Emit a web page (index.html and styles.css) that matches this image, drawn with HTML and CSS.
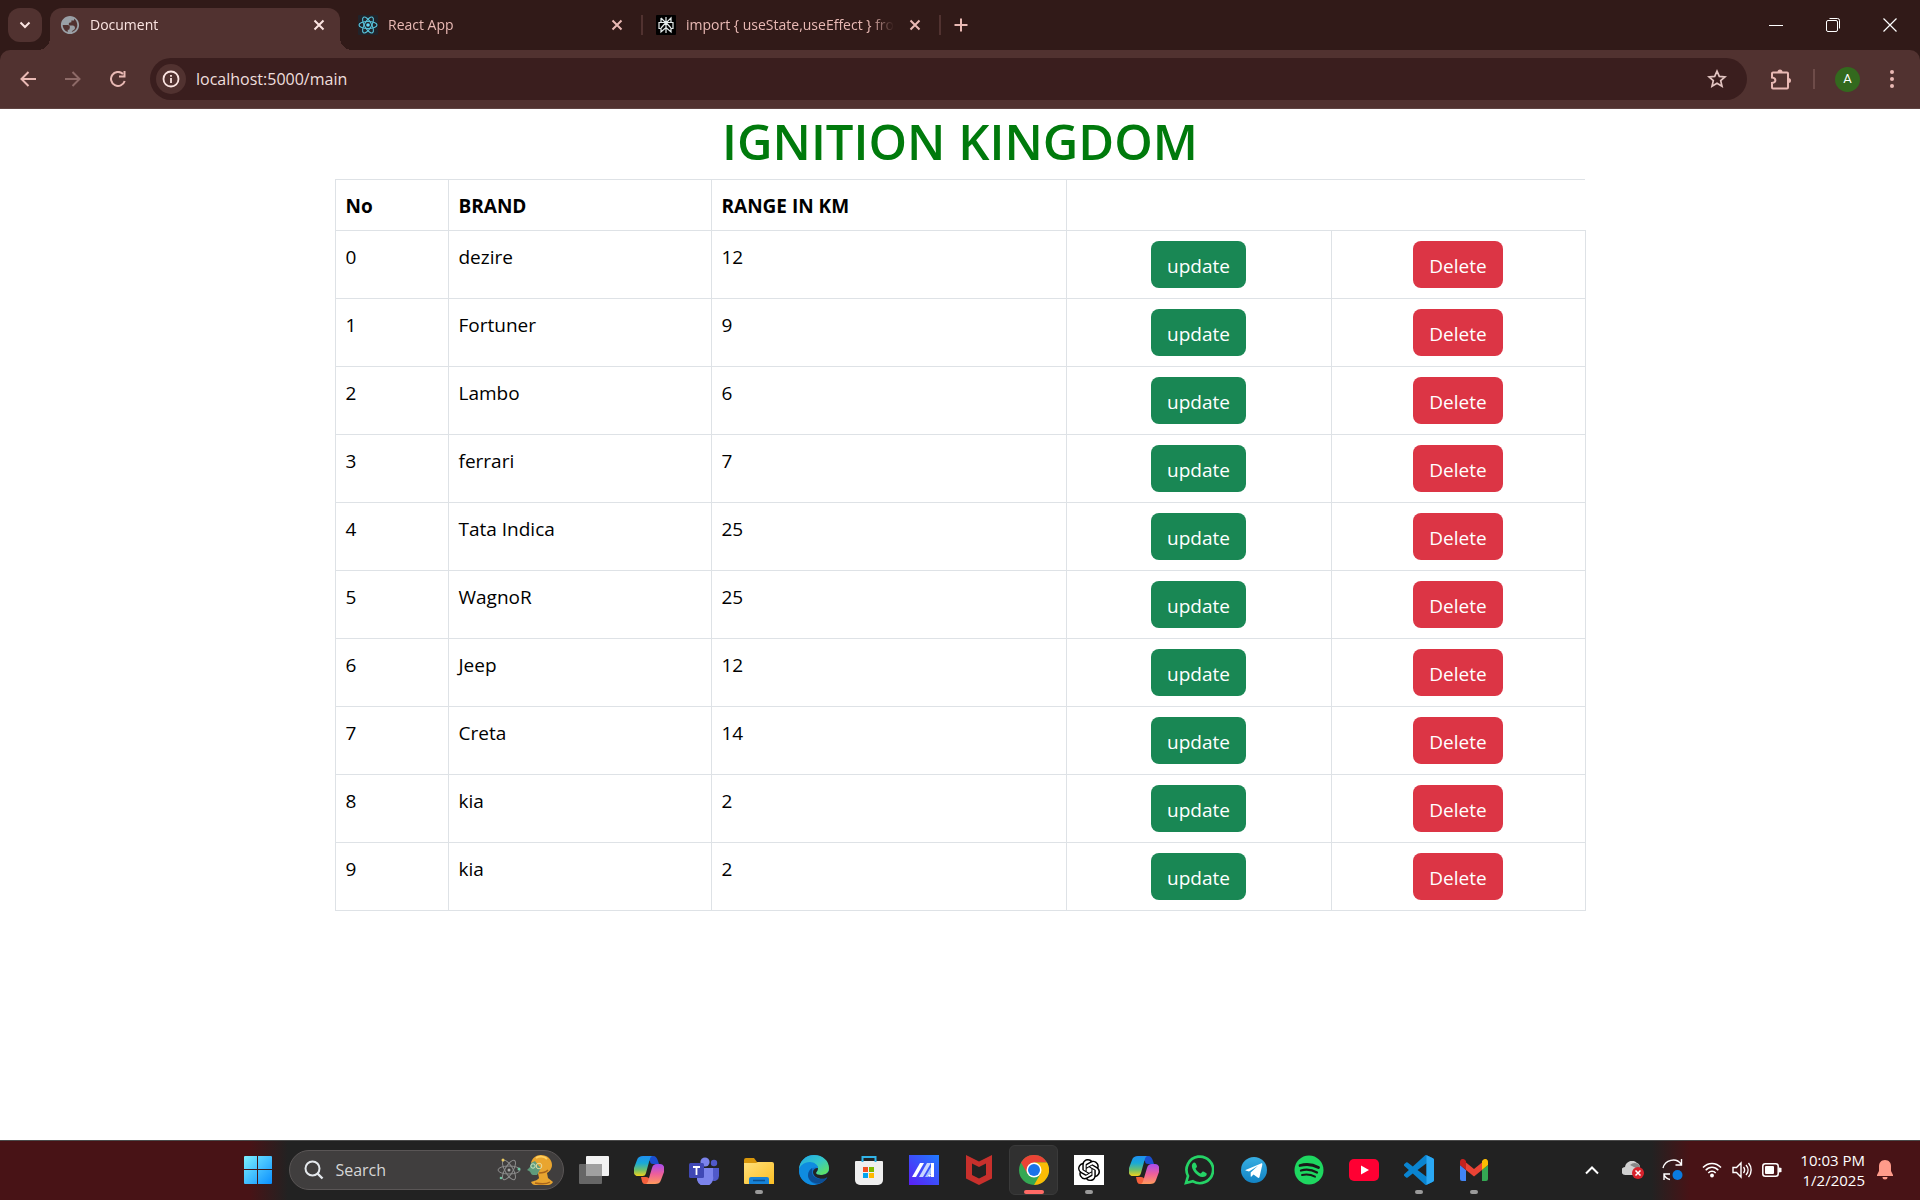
FILE: index.html
```html
<!DOCTYPE html>
<html lang="en">
<head>
<meta charset="utf-8">
<title>Document</title>
<meta name="viewport" content="width=device-width, initial-scale=1">
<link rel="stylesheet" href="styles.css">
</head>
<body>
<svg class="defs" width="0" height="0" aria-hidden="true">
  <defs>
    <linearGradient id="cpBlue" x1="0" y1="0" x2="0" y2="1"><stop offset="0" stop-color="#1f8ff0"/><stop offset=".35" stop-color="#18a9d8"/><stop offset=".7" stop-color="#6fc06a"/><stop offset="1" stop-color="#f2d21c"/></linearGradient>
    <linearGradient id="cpPink" x1="0" y1="0" x2="0" y2="1"><stop offset="0" stop-color="#a64cf0"/><stop offset=".5" stop-color="#ee5f9a"/><stop offset="1" stop-color="#ff9a5c"/></linearGradient>
    <linearGradient id="win" x1="0" y1="0" x2="1" y2="1"><stop offset="0" stop-color="#7cf0ff"/><stop offset="1" stop-color="#0a8fff"/></linearGradient>
    <linearGradient id="folder" x1="0" y1="0" x2="1" y2="1"><stop offset="0" stop-color="#ffe07a"/><stop offset="1" stop-color="#fbbf24"/></linearGradient>
    <linearGradient id="edgeTop" x1="0" y1="0" x2="1" y2="1"><stop offset="0" stop-color="#1fa6e8"/><stop offset=".5" stop-color="#35c8c8"/><stop offset="1" stop-color="#6ae84a"/></linearGradient>
    <linearGradient id="ma" x1="0" y1="1" x2="1" y2="0"><stop offset="0" stop-color="#5b1ff5"/><stop offset="1" stop-color="#1f7bff"/></linearGradient>
    <linearGradient id="tg" x1="0" y1="0" x2="0" y2="1"><stop offset="0" stop-color="#37aee2"/><stop offset="1" stop-color="#1283c4"/></linearGradient>
    <symbol id="close" viewBox="0 0 14 14"><path d="M2.500 2.500l9 9M11.500 2.500l-9 9" fill="none" stroke="currentColor" stroke-width="2"/></symbol>
    <symbol id="copilot" viewBox="0 0 30 28">
      <path d="M9 0h10c3 0 4 2 5 5l1 3h-6c-2 0-3-1-3-3z" fill="#1a4fd0"/>
      <path d="M21 28H11c-3 0-3-3-4-7h5c2 0 3 1 4 3z" fill="#f4603c"/>
      <path d="M9 0h9c-2 1-2 3-3 6l-3 11c-1 3-2 3-5 3H4c-4 0-5-4-4-8l3-8c1-3 3-4 6-4z" fill="url(#cpBlue)"/>
      <path d="M21 28h-9c2-1 2-3 3-6l3-10c1-3 2-4 5-4h3c4 0 5 4 4 8l-3 8c-1 3-3 4-6 4z" fill="url(#cpPink)"/>
    </symbol>
  </defs>
</svg>

<div class="window">
  <header class="browser">
    <div class="tabstrip">
      <button class="tab-search" aria-label="Search tabs"><svg width="12" height="8" viewBox="0 0 12 8"><path d="M1.500 1.500L6 6l4.500-4.500" fill="none" stroke="currentColor" stroke-width="2"/></svg></button>
      <nav class="tabs" aria-label="Tabs">
        <div class="tab active">
          <svg class="favicon" width="20" height="20" viewBox="1 1 22 22"><path fill="#9aa0a6" d="M12 2C6.480 2 2 6.480 2 12s4.480 10 10 10 10-4.480 10-10S17.520 2 12 2zM4 12h4.400c3.400 0 4.300 1.700 2.700 5.100H9.500v2.500C6.300 18.600 4 15.500 4 12zm10 7.700c0-2 3.500-1.700 3.500-4.700 0-2-1.500-2.500-3.500-2.500h-3c-1-2.500 0-3.500 2.500-3.500V7h3V5c2 1.300 3.500 4 3.500 7 0 3.700-2.500 6.800-6 7.700z"/></svg>
          <a class="tab-title" href="#document">Document</a>
          <button class="tab-close" aria-label="Close Document"><svg width="14" height="14"><use href="#close"/></svg></button>
        </div>
        <div class="tab">
          <svg class="favicon" width="20" height="20" viewBox="0 0 20 20"><rect width="20" height="20" rx="1" fill="#20232a"/><g fill="none" stroke="#58c4dc" stroke-width="1.100"><ellipse cx="10" cy="10" rx="9" ry="3.500"/><ellipse cx="10" cy="10" rx="9" ry="3.500" transform="rotate(60 10 10)"/><ellipse cx="10" cy="10" rx="9" ry="3.500" transform="rotate(120 10 10)"/></g><circle cx="10" cy="10" r="1.800" fill="#61dafb"/></svg>
          <a class="tab-title" href="#react">React App</a>
          <button class="tab-close" aria-label="Close React App"><svg width="14" height="14"><use href="#close"/></svg></button>
        </div>
        <div class="tab divided">
          <svg class="favicon" width="20" height="20" viewBox="0 0 20 20"><rect width="20" height="20" rx="1" fill="#000"/><path d="M10 2v16M5 3l5 5 5-5v4.500M5 3v4.500M3 7.500h14v6h-2V17l-5-4.500L5 17v-3.500H3zM10 7.500L5 13M10 7.500l5 5.500" fill="none" stroke="#e6ecec" stroke-width="1.200"/></svg>
          <a class="tab-title" href="#import">import { useState,useEffect } from</a>
          <button class="tab-close" aria-label="Close import"><svg width="14" height="14"><use href="#close"/></svg></button>
        </div>
      </nav>
      <button class="new-tab" aria-label="New tab"><svg width="14" height="14" viewBox="0 0 14 14"><path d="M7 0.500v13M.5 7h13" stroke="currentColor" stroke-width="2"/></svg></button>
      <div class="window-controls">
        <button aria-label="Minimize"><svg width="14" height="14" viewBox="0 0 14 14"><path d="M0 7.500h14" stroke="#fff"/></svg></button>
        <button aria-label="Restore"><svg width="14" height="14" viewBox="0 0 14 14"><path d="M3.500 .5h8a2 2 0 0 1 2 2v8" fill="none" stroke="#fff"/><rect x=".5" y="2.500" width="11" height="11" rx="1.500" fill="none" stroke="#fff"/></svg></button>
        <button aria-label="Close window"><svg width="14" height="14" viewBox="0 0 14 14"><path d="M.5 .5l13 13M13.500 .5l-13 13" stroke="#fff" stroke-width="1.200"/></svg></button>
      </div>
    </div>
    <div class="toolbar">
      <button class="nav-button" aria-label="Back"><svg width="16" height="16" viewBox="0 0 16 16"><path d="M16 8H1.500M8.500 1L1.500 8l7 7" fill="none" stroke="currentColor" stroke-width="2"/></svg></button>
      <button class="nav-button" aria-label="Forward" disabled><svg width="16" height="16" viewBox="0 0 16 16"><path d="M0 8h14.500M7.500 1l7 7-7 7" fill="none" stroke="currentColor" stroke-width="2"/></svg></button>
      <button class="nav-button" aria-label="Reload"><svg width="16" height="16" viewBox="0 0 16 16"><path d="M13 3A7 7 0 1 0 14.700 10" fill="none" stroke="currentColor" stroke-width="2"/><path d="M15.500 0v6.500H9v-2h4.500V0z" fill="currentColor"/></svg></button>
      <div class="omnibox">
        <button class="site-info" aria-label="Site information"><svg width="18" height="18" viewBox="0 0 18 18"><circle cx="9" cy="9" r="7.500" fill="none" stroke="currentColor" stroke-width="1.800"/><path d="M9 8v5M9 5v1.800" stroke="currentColor" stroke-width="1.800"/></svg></button>
        <input class="address" type="text" value="localhost:5000/main" aria-label="Address">
        <button class="bookmark" aria-label="Bookmark"><svg width="20" height="20" viewBox="0 0 20 20"><path d="M10 2.200l2.300 5.200 5.700.5-4.300 3.700 1.300 5.600-5-3-5 3 1.300-5.600L2 7.900l5.700-.5z" fill="none" stroke="currentColor" stroke-width="1.700"/></svg></button>
      </div>
      <button class="tool" aria-label="Extensions"><svg width="22" height="22" viewBox="0 0 22 22"><path d="M2 5.500a1 1 0 0 1 1-1h14a1 1 0 0 1 1 1v14a1 1 0 0 1-1 1H3a1 1 0 0 1-1-1V15c4.500-.5 4.500-5 0-5.500z" fill="none" stroke="currentColor" stroke-width="2"/><path d="M7.500 4a2.500 2.500 0 0 1 5 0zM18.500 10a2.500 2.500 0 0 1 0 5z" fill="currentColor"/></svg></button>
      <span class="tool-divider"></span>
      <button class="avatar" aria-label="Profile">A</button>
      <button class="tool menu" aria-label="Menu"><svg width="4" height="18" viewBox="0 0 4 18"><g fill="currentColor"><circle cx="2" cy="2" r="2"/><circle cx="2" cy="9" r="2"/><circle cx="2" cy="16" r="2"/></g></svg></button>
    </div>
  </header>

  <main class="page">
    <h1>IGNITION KINGDOM</h1>
    <table class="cars">
      <colgroup><col class="c-no"><col class="c-brand"><col class="c-range"><col class="c-update"><col class="c-delete"></colgroup>
      <thead><tr><th scope="col">No</th><th scope="col">BRAND</th><th scope="col">RANGE IN KM</th></tr></thead>
      <tbody>
        <tr><td>0</td><td>dezire</td><td>12</td><td class="action"><button class="btn update">update</button></td><td class="action"><button class="btn delete">Delete</button></td></tr>
        <tr><td>1</td><td>Fortuner</td><td>9</td><td class="action"><button class="btn update">update</button></td><td class="action"><button class="btn delete">Delete</button></td></tr>
        <tr><td>2</td><td>Lambo</td><td>6</td><td class="action"><button class="btn update">update</button></td><td class="action"><button class="btn delete">Delete</button></td></tr>
        <tr><td>3</td><td>ferrari</td><td>7</td><td class="action"><button class="btn update">update</button></td><td class="action"><button class="btn delete">Delete</button></td></tr>
        <tr><td>4</td><td>Tata Indica</td><td>25</td><td class="action"><button class="btn update">update</button></td><td class="action"><button class="btn delete">Delete</button></td></tr>
        <tr><td>5</td><td>WagnoR</td><td>25</td><td class="action"><button class="btn update">update</button></td><td class="action"><button class="btn delete">Delete</button></td></tr>
        <tr><td>6</td><td>Jeep</td><td>12</td><td class="action"><button class="btn update">update</button></td><td class="action"><button class="btn delete">Delete</button></td></tr>
        <tr><td>7</td><td>Creta</td><td>14</td><td class="action"><button class="btn update">update</button></td><td class="action"><button class="btn delete">Delete</button></td></tr>
        <tr><td>8</td><td>kia</td><td>2</td><td class="action"><button class="btn update">update</button></td><td class="action"><button class="btn delete">Delete</button></td></tr>
        <tr><td>9</td><td>kia</td><td>2</td><td class="action"><button class="btn update">update</button></td><td class="action"><button class="btn delete">Delete</button></td></tr>
      </tbody>
    </table>
  </main>

  <footer class="taskbar">
    <div class="apps">
      <button class="app" aria-label="Start"><svg width="30" height="30" viewBox="0 0 30 30"><path fill="url(#win)" d="M2 1h12v13H1V2a1 1 0 0 1 1-1zM15 1h13a1 1 0 0 1 1 1v12H15zM1 15h13v14H2a1 1 0 0 1-1-1zM15 15h14v13a1 1 0 0 1-1 1H15z"/></svg></button>
      <label class="search">
        <svg width="20" height="20" viewBox="0 0 20 20"><circle cx="8.500" cy="8.500" r="7" fill="none" stroke="#e4e8ec" stroke-width="2"/><path d="M13.500 13.500l5 5" stroke="#e4e8ec" stroke-width="2.400"/></svg>
        <input type="search" placeholder="Search" aria-label="Search">
        <svg width="24" height="24" viewBox="0 0 24 24"><g fill="none" stroke="#8c8c8c" stroke-width="1"><ellipse cx="12" cy="12" rx="11" ry="4"/><ellipse cx="12" cy="12" rx="11" ry="4" transform="rotate(60 12 12)"/><ellipse cx="12" cy="12" rx="11" ry="4" transform="rotate(120 12 12)"/></g><circle cx="12" cy="12" r="1.500" fill="#aaa"/><circle cx="6" cy="2" r="1.500" fill="#e8c860"/><circle cx="22" cy="11" r="1.500" fill="#6fc0a0"/><circle cx="4" cy="20" r="1.300" fill="#6fc0a0"/></svg>
        <svg width="26" height="30" viewBox="0 0 26 30"><path d="M4 8C5 3 9 0 14 0c6 0 11 4 11 10 0 4-3 7-5 8l1 5 5 4c-1 2-3 3-5 3H8c-2 0-3-1-4-3 3-1 7-2 8-4l-1-5z" fill="#e9a52f"/><path d="M4 8l4-2 3 4 3 3-4 7H6c-2 0-2-3-4-4l-2-1 3-3z" fill="#5f9b7c"/><path d="M12 18c4 0 7-1 9-3M8 28c5 1 12 1 15-1" fill="none" stroke="#a8651c" stroke-width="1.500"/><circle cx="6" cy="11" r="2.200" fill="none" stroke="#cfe6c0" stroke-width="1"/><circle cx="12" cy="11" r="2.800" fill="none" stroke="#e8dca0" stroke-width="1"/><path d="M9 3c3-2 8-2 11 1" stroke="#ffd060" stroke-width="2" fill="none"/></svg>
      </label>
      <button class="app" aria-label="Task view"><svg width="30" height="30" viewBox="0 0 30 30"><rect x="7" y="1" width="23" height="20" rx="1" fill="#f2f2f2"/><rect x="0" y="9" width="23" height="20" rx="1" fill="#666"/><path d="M7 9h16v12H7z" fill="#a0a0a0"/></svg></button>
      <button class="app" aria-label="Copilot"><svg width="30" height="28"><use href="#copilot"/></svg></button>
      <button class="app" aria-label="Teams"><svg width="30" height="30" viewBox="0 0 30 30"><circle cx="25" cy="8" r="3.200" fill="#5059c9"/><path d="M19 13h11v8a5 5 0 0 1-8 4z" fill="#5059c9"/><circle cx="16" cy="7" r="4.600" fill="#7b83eb"/><path d="M8 13h16v8a8 8 0 0 1-16 4z" fill="#7b83eb"/><rect y="8" width="15" height="15" rx="1.500" fill="#4048b5"/><path d="M4 12h7M7.500 12v8" stroke="#fff" stroke-width="1.800"/></svg></button>
      <button class="app running" aria-label="File Explorer"><svg width="30" height="30" viewBox="0 0 30 30"><path d="M0 5a2 2 0 0 1 2-2h8l3 4h10v8H0z" fill="#d8960a"/><path d="M0 8h12l2-1h14a2 2 0 0 1 2 2v20H1a1 1 0 0 1-1-1z" fill="url(#folder)"/><path d="M5 29v-5a2 2 0 0 1 2-2h16a2 2 0 0 1 2 2v5z" fill="#1683d8"/><path d="M9 25.500h12" stroke="#0b4f8f" stroke-width="1.500"/></svg></button>
      <button class="app" aria-label="Edge"><svg width="30" height="30" viewBox="0 0 30 30"><circle cx="15" cy="15" r="15" fill="#0f6fc8"/><path d="M0 15C0 6 7 0 15 0c9 0 15 6 15 13 0 5-4 7-8 7-3 0-5-1-5-2 0-1 2-2 2-5 0-3-4-5-8-5-6 0-10 3-11 7z" fill="url(#edgeTop)"/><path d="M0 16c0-5 5-9 11-9 4 0 8 3 8 6-4-2-10 1-10 7 0 5 4 9 9 9.600C8 32 0 24 0 16z" fill="#0f8ce0"/><path d="M13 13c-3 2-4 5-4 8 1 6 8 9 14 6.500 3-1.500 4-3 5.500-5C22 26 14 23 13 18z" fill="#0c4f96"/><path d="M17 18c0 1 2 2 5 2 3 0 6-1 8-4v6l-1.500 0C24 26 14 23 14 17c0-2 2-4 5-4 0 3-2 4-2 5z" fill="#232323"/></svg></button>
      <button class="app" aria-label="Microsoft Store"><svg width="30" height="30" viewBox="0 0 30 30"><path d="M1 7a1 1 0 0 1 1-1h26a1 1 0 0 1 1 1v18a5 5 0 0 1-5 5H6a5 5 0 0 1-5-5z" fill="#efefef"/><path d="M8.500 7V2h13v5" fill="none" stroke="#31b4e8" stroke-width="2"/><path d="M9 12h5v5H9z" fill="#f25022"/><path d="M15 12h5v5h-5z" fill="#7fba00"/><path d="M9 18h5v5H9z" fill="#00a4ef"/><path d="M15 18h5v5h-5z" fill="#ffb900"/></svg></button>
      <button class="app" aria-label="MyASUS"><svg width="30" height="30" viewBox="0 0 30 30"><path d="M0 0h30v30H0z" fill="url(#ma)"/><path d="M3 22L11 8h4L7 22z" fill="#fff"/><path d="M10 22l8-14h4l-8 14z" fill="#c9d6ff"/><path d="M22 8h3v14h-3z" fill="#fff"/><path d="M16 22l6-10v7h-2l-1 3z" fill="#9fc0ff"/><circle cx="20.500" cy="20.500" r="1.300" fill="#fff"/></svg></button>
      <button class="app" aria-label="McAfee"><svg width="30" height="30" viewBox="0 0 30 30"><path fill="#c8302c" d="M2 0l13 6.500L28 0v23.500L15 30 2 23.500zM8 8.500v11.500l7 3.500 7-3.500V8.500L15 12z"/></svg></button>
      <button class="app current" aria-label="Chrome"><svg width="30" height="30" viewBox="0 0 30 30"><circle cx="15" cy="15" r="15" fill="#34a853"/><path d="M2 7.500A15 15 0 0 1 28 7.500H15L8.500 18.800z" fill="#ea4335"/><path d="M28 7.500A15 15 0 0 1 15 30l6.500-11.300L15 7.500z" fill="#fbbc05"/><circle cx="15" cy="15" r="7.500" fill="#fff"/><circle cx="15" cy="15" r="6" fill="#1a73e8"/></svg></button>
      <button class="app running" aria-label="ChatGPT"><svg width="30" height="30" viewBox="0 0 30 30"><path d="M0 0h30v30H0z" fill="#fff"/><path transform="translate(4 4) scale(.92)" d="M22.282 9.821a5.985 5.985 0 0 0-.516-4.911 6.046 6.046 0 0 0-6.510-2.900A6.065 6.065 0 0 0 4.981 4.182a5.985 5.985 0 0 0-3.998 2.900 6.046 6.046 0 0 0 .743 7.097 5.980 5.980 0 0 0 .511 4.911 6.051 6.051 0 0 0 6.515 2.900A5.985 5.985 0 0 0 13.260 24a6.056 6.056 0 0 0 5.772-4.206 5.989 5.989 0 0 0 3.998-2.900 6.056 6.056 0 0 0-.748-7.073zm-9.022 12.608a4.476 4.476 0 0 1-2.876-1.041l.142-.080 4.778-2.758a.795.795 0 0 0 .393-.681v-6.737l2.020 1.169a.071.071 0 0 1 .038.052v5.583a4.504 4.504 0 0 1-4.495 4.494zm-9.661-4.125a4.471 4.471 0 0 1-.535-3.014l.142.085 4.783 2.758a.771.771 0 0 0 .781 0l5.843-3.369v2.332a.080.080 0 0 1-.033.062L9.740 19.950a4.499 4.499 0 0 1-6.141-1.646zM2.341 7.896a4.485 4.485 0 0 1 2.366-1.973V11.600a.766.766 0 0 0 .388.677l5.814 3.354-2.020 1.169a.076.076 0 0 1-.071 0l-4.830-2.787A4.504 4.504 0 0 1 2.341 7.872zm16.596 3.856L13.104 8.364 15.119 7.200a.076.076 0 0 1 .071 0l4.830 2.791a4.494 4.494 0 0 1-.677 8.104v-5.677a.790.790 0 0 0-.407-.667zm2.011-3.023l-.142-.085-4.774-2.782a.776.776 0 0 0-.785 0L9.409 9.230V6.897a.066.066 0 0 1 .028-.062l4.830-2.787a4.499 4.499 0 0 1 6.680 4.660zM8.307 12.863l-2.020-1.164a.080.080 0 0 1-.038-.057V6.074a4.499 4.499 0 0 1 7.376-3.454l-.142.081L8.704 5.459a.795.795 0 0 0-.393.681zm1.098-2.365l2.602-1.500 2.607 1.500v2.999l-2.597 1.500-2.607-1.500z"/></svg></button>
      <button class="app" aria-label="Microsoft 365 Copilot"><svg width="30" height="28"><use href="#copilot"/></svg></button>
      <button class="app" aria-label="WhatsApp"><svg width="30" height="30" viewBox="0 0 30 30"><path d="M2 28l2-7A13.300 13.300 0 1 1 9 26.300z" fill="none" stroke="#25d366" stroke-width="2.700"/><path d="M10.500 7.500c-1.500 0-3 1.800-2.600 4.300.7 4.700 6 9.900 10.300 10.300 2.300.2 4.600-1 4.600-3.300 0-.6-3.300-2.400-4-2.300-.6 0-1.500 2-2.200 1.900-1.800-.5-4.300-2.800-5-4.700-.2-.7 1.500-1.400 1.400-2.300-.1-.8-1.300-3.900-2.500-3.900z" fill="#25d366"/></svg></button>
      <button class="app" aria-label="Telegram"><svg width="26" height="26" viewBox="0 0 26 26"><circle cx="13" cy="13" r="13" fill="url(#tg)"/><path d="M4.500 13L20 6.500c1-.4 1.500.2 1.300 1.200L18.500 20c-.2 1-1 1.200-1.800.6l-4.200-3-2 2c-.5.400-.8.300-.8-.4v-3.600L17 8.800 8 14.500l-3.500-1z" fill="#fff"/></svg></button>
      <button class="app" aria-label="Spotify"><svg width="30" height="30" viewBox="0 0 30 30"><circle cx="15" cy="15" r="14.500" fill="#1ed760"/><path d="M6 10.500c6-1.700 13-1 18.500 2" fill="none" stroke="#191919" stroke-width="2.800" stroke-linecap="round"/><path d="M7 15.500c5-1.400 11-.8 16 2" fill="none" stroke="#191919" stroke-width="2.300" stroke-linecap="round"/><path d="M8 20c4.500-1 9-.5 13 1.700" fill="none" stroke="#191919" stroke-width="1.900" stroke-linecap="round"/></svg></button>
      <button class="app" aria-label="YouTube"><svg width="30" height="22" viewBox="0 0 30 22"><rect width="30" height="22" rx="5" fill="#ff0033"/><path d="M12 6.500v9l8-4.500z" fill="#fff"/></svg></button>
      <button class="app running" aria-label="Visual Studio Code"><svg width="30" height="30" viewBox="0 0 24 24"><path fill="#0a84d0" d="M23.150 2.587L18.210.210a1.494 1.494 0 0 0-1.705.290l-9.460 8.630-4.120-3.128a.999.999 0 0 0-1.276.057L.327 7.261A1 1 0 0 0 .326 8.740L3.899 12 .326 15.260a1 1 0 0 0 .001 1.479L1.650 17.940a.999.999 0 0 0 1.276.057l4.120-3.128 9.460 8.630a1.492 1.492 0 0 0 1.704.290l4.942-2.377A1.500 1.500 0 0 0 24 20.060V3.939a1.500 1.500 0 0 0-.850-1.352zm-5.146 14.861L10.826 12l7.178-5.448z"/><path fill="#2aa8f4" d="M18 .2l5.150 2.387A1.500 1.500 0 0 1 24 3.939V20.060a1.500 1.500 0 0 1-.850 1.352L18 23.800z"/></svg></button>
      <button class="app running" aria-label="Gmail"><svg width="28" height="22" viewBox="0 0 28 22"><path d="M0 6l6 5v11H2a2 2 0 0 1-2-2z" fill="#4285f4"/><path d="M28 6l-6 5v11h4a2 2 0 0 0 2-2z" fill="#34a853"/><path d="M6 3.500l8 6.500 8-6.500V11l-8 6.500L6 11z" fill="#ea4335"/><path d="M0 6V3c0-3 3-4 5-2l1 1v9z" fill="#c5221f"/><path d="M28 6V3c0-3-3-4-5-2l-1 1v9z" fill="#fbbc04"/></svg></button>
    </div>
    <div class="tray">
      <button class="chevron" aria-label="Hidden icons"><svg width="14" height="10" viewBox="0 0 14 10"><path d="M1 8.500l6-6 6 6" fill="none" stroke="#fff" stroke-width="2"/></svg></button>
      <button aria-label="OneDrive"><svg width="22" height="18" viewBox="0 0 22 18"><path d="M4 14a4 4 0 0 1-1-8 7 7 0 0 1 12-4c3 1 3 4 3 5v7z" fill="#d0d0d0"/><path d="M8 4a7 7 0 0 1 8-1c2 1 2 3 2 5l-4-1z" fill="#888"/><circle cx="16" cy="12" r="6" fill="#d8222c"/><path d="M13.500 9.500l5 5M18.500 9.500l-5 5" stroke="#fff" stroke-width="1.500"/></svg></button>
      <button aria-label="Sync"><svg width="22" height="22" viewBox="0 0 22 22"><path d="M1 9C3 1 14-2 19 5M19.500 0v6h-6M8 20.500C5 20 3 18 2 15.500M2 21v-6h6" fill="none" stroke="#fff" stroke-width="1.400"/><circle cx="15.500" cy="16" r="5" fill="#0a7be0"/></svg></button>
      <button class="status" aria-label="Network, volume and battery">
        <svg width="20" height="16" viewBox="0 0 20 16"><g fill="none" stroke="#fff" stroke-width="1.500"><path d="M1 5.500c5-5.500 13-5.500 18 0M3.700 8.300c3.600-4 9-4 12.600 0M6.300 11c2-2.300 5.400-2.300 7.400 0"/></g><circle cx="10" cy="13.500" r="1.900" fill="#fff"/></svg>
        <svg width="20" height="18" viewBox="0 0 20 18"><path d="M1 6.500h3.500L9 2v14l-4.500-4.500H1zM11.500 6c1.500 2 1.500 4 0 6M14 4c2.700 3 2.700 7 0 10M16.500 2c3.500 4 3.500 10 0 14" fill="none" stroke="#fff" stroke-width="1.400"/></svg>
        <svg width="20" height="14" viewBox="0 0 20 14"><rect x=".8" y=".8" width="15.400" height="12.400" rx="2.500" fill="none" stroke="#fff" stroke-width="1.500"/><rect x="3" y="3" width="9" height="8" rx="1" fill="#fff"/><path d="M17 4.500l2.500.5v4l-2.500.5z" fill="#fff"/></svg>
      </button>
      <time class="clock" datetime="2025-01-02T22:03"><span>10:03 PM</span><span>1/2/2025</span></time>
      <button class="bell" aria-label="Notifications"><svg width="16" height="20" viewBox="0 0 16 20"><path d="M8 0c4 0 6 3 6 6v5l2 4v1H0v-1l2-4V6c0-3 2-6 6-6zM5.500 17h5a2.500 2.500 0 0 1-5 0z" fill="#ff9b8a"/></svg></button>
    </div>
  </footer>
</div>
</body>
</html>
```
FILE: styles.css
```css
* { box-sizing: border-box; }

body {
  margin: 0;
  font-family: "Open Sans", "Noto Sans", sans-serif;
  font-size: 19px;
  line-height: 30px;
  color: #000;
  background: #fff;
}

button, input { font: inherit; color: inherit; margin: 0; padding: 0; border: 0; background: none; }
button { display: flex; align-items: center; justify-content: center; }
input { outline: 0; min-width: 0; }
a { color: inherit; text-decoration: none; }
svg { display: block; flex: none; }
.defs { position: absolute; }

.window { min-height: 100vh; display: flex; flex-direction: column; }

/* Browser frame */
.browser { background: #311a18; color: #e9b9b4; }
.tabstrip { display: flex; align-items: flex-start; height: 50px; padding: 8px 2px 0 8px; }
.tab-search { width: 34px; height: 34px; border-radius: 12px; background: #513230; color: #fbe4e1; margin-right: 8px; }
.tabs { display: flex; gap: 8px; }
.tab { position: relative; display: flex; align-items: center; width: 290px; height: 34px; padding: 0 14px 0 10px; gap: 10px; }
.tab.active { height: 42px; padding-bottom: 8px; border-radius: 12px 12px 0 0; background: #513230; color: #fbe4e1; }
.tab.active::before, .tab.active::after {
  content: ""; position: absolute; bottom: 0; width: 12px; height: 12px;
}
.tab.active::before { right: 100%; background: radial-gradient(circle at 0 0, transparent 12px, #513230 12px); }
.tab.active::after { left: 100%; background: radial-gradient(circle at 100% 0, transparent 12px, #513230 12px); }
.tab.divided::before, .tab.divided::after {
  content: ""; position: absolute; top: 7px; width: 2px; height: 20px; background: #513230;
}
.tab.divided::before { left: -5px; }
.tab.divided::after { right: -5px; }
.tab-title {
  flex: 1; overflow: hidden; white-space: nowrap; font-size: 14px; margin-right: 4px;
  mask-image: linear-gradient(to left, transparent, #000 24px);
}
.new-tab { width: 34px; height: 34px; margin-left: 8px; }
.window-controls { display: flex; margin-left: auto; }
.window-controls button { width: 57px; height: 34px; }

.toolbar {
  display: flex; align-items: center; height: 59px;
  padding: 0 18px 0 10px; background: #513230; border-bottom: 1px solid #5f4442;
  border-radius: 10px 10px 0 0;
}
.nav-button { width: 35px; height: 42px; margin-right: 10px; }
.nav-button:disabled { color: #8d6a67; }
.omnibox { flex: 1; display: flex; align-items: center; height: 42px; margin-left: 5px; padding: 0 20px 0 6px; border-radius: 21px; background: #3a1e1e; }
.site-info { width: 30px; height: 30px; border-radius: 50%; background: #513230; color: #fbe4e1; }
.address { flex: 1; margin-left: 10px; font-size: 16px; color: #efdfdd; }
.bookmark { color: #e2c4c1; }
.tool { width: 42px; height: 42px; margin-left: 13px; }
.tool-divider { width: 2px; height: 20px; margin: 0 20px 0 11px; background: #6e4c49; }
.avatar { width: 25px; height: 25px; border-radius: 50%; background: #33691e; color: #fff; font-family: Roboto, sans-serif; font-size: 13px; }
.tool.menu { width: 20px; margin-left: 22px; }

/* Page */
.page { flex: 1; padding: 0 16px; }
h1 { margin: 0; padding: 2px 0 8px; text-align: center; font-size: 49px; line-height: 60px; font-weight: 600; color: #007a0c; }
.cars { width: 100%; max-width: 1250px; margin: 0 auto 24px; border-collapse: collapse; table-layout: fixed; border-top: 1px solid #dee2e6; }
.c-no { width: 113px; }
.c-brand { width: 263px; }
.c-range { width: 355px; }
.c-update { width: 265px; }
.c-delete { width: 254px; }
.cars th, .cars td { padding: 11px 10px 9px; border: 1px solid #dee2e6; text-align: left; vertical-align: top; }
.cars .action { padding: 10px; }
.cars th { font-weight: 700; }
.btn { margin: 0 auto; height: 47px; padding: 2px 16px 0; border-radius: 8px; color: #fff; }
.update { background: #198754; }
.delete { background: #dc3545; }

/* Taskbar */
.taskbar {
  display: flex; align-items: center; justify-content: space-between; height: 60px; padding: 0 27px 2px 12%;
  border-top: 1px solid #4a4a4a;
  background: linear-gradient(to right, #481316 0, #481316 13%, #222 15%, #222 86%, #481316 88%, #481316 100%);
  color: #fff;
}
.apps { display: flex; align-items: center; }
.app { position: relative; width: 55px; height: 50px; }
.app.running::after {
  content: ""; position: absolute; bottom: 1px; left: 24px; width: 8px; height: 4px; border-radius: 2px; background: #9a9a9a;
}
.app.current { width: 49px; margin: 0 3px; border-radius: 6px; background: #303030; border: 1px solid #3a3a3a; }
.app.current::after {
  content: ""; position: absolute; bottom: 0; left: 14px; width: 20px; height: 4px; border-radius: 2px; background: #ff6b66;
}
.search { display: flex; align-items: center; width: 275px; height: 40px; margin: 0 2px 0 4px; padding: 0 10px 0 14px; border: 1px solid #5a5656; border-radius: 20px; background: #403e3e; }
.search input { flex: 1; margin-left: 11px; font-size: 16px; }
.search input::placeholder { color: #d6d6d6; opacity: 1; }
.search svg + svg { margin-left: 6px; }
.tray { display: flex; align-items: center; gap: 18px; }
.chevron { margin-right: 5px; }
.status { gap: 10px; }
.clock { display: flex; flex-direction: column; align-items: flex-end; font-size: 15px; line-height: 20px; }
.bell { margin-left: -6px; }
```
